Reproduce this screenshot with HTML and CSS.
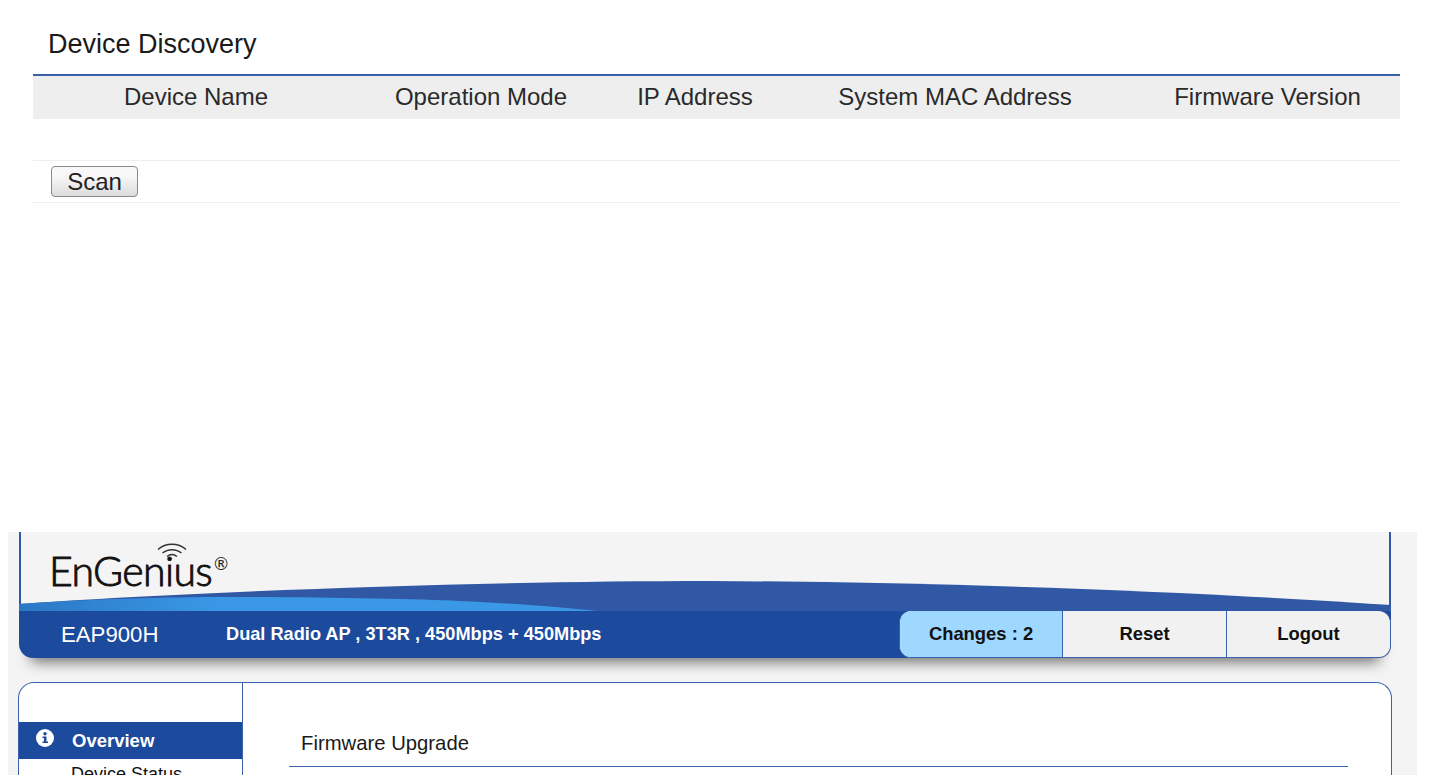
FILE: index.html
```html
<!DOCTYPE html>
<html lang="en">
<head>
<meta charset="utf-8">
<title>EnGenius EAP900H</title>
<link rel="stylesheet" href="styles.css">
</head>
<body>
<section class="discovery">
  <h1 class="discovery-title">Device Discovery</h1>
  <div class="device-head">
    <span>Device Name</span>
    <span>Operation Mode</span>
    <span>IP Address</span>
    <span>System MAC Address</span>
    <span class="last-col">Firmware Version</span>
  </div>
  <div class="device-empty"></div>
  <div class="device-actions"><button class="scan" type="button">Scan</button></div>
</section>
<section class="shot">
  <header class="head">
    <svg class="swoosh" width="1372" height="80" viewBox="0 0 1372 80" aria-hidden="true">
      <defs>
        <linearGradient id="lb" x1="0" x2="1" y1="0" y2="0">
          <stop offset="0" stop-color="#2a78c4"/>
          <stop offset=".35" stop-color="#3a98e6"/>
          <stop offset="1" stop-color="#3a98e6"/>
        </linearGradient>
      </defs>
      <path d="M0 72 C170 60 460 49 690 49 C930 50 1180 60 1372 73 V81 H0Z" fill="#3058a4"/>
      <path d="M0 72 C70 67 150 65 209 65 C300 65 400 67 439 69 C490 71 540 75 578 79 V81 H0Z" fill="url(#lb)"/>
    </svg>
    <div class="logo">
      <span class="logo-word">EnGen<span class="logo-i">i</span>us</span><span class="logo-reg">®</span>
      <svg class="logo-wifi" width="32" height="20" viewBox="0 0 32 20" aria-hidden="true">
        <path d="M2 7.500C10 .5 22 .5 30 7.500" />
        <path d="M6.500 11C12 6.500 20 6.500 25.500 11" />
        <path d="M11 14.500C14 12 18 12 21 14.500" />
      </svg>
    </div>
    <div class="bar">
      <span class="model">EAP900H</span>
      <span class="tagline">Dual Radio AP , 3T3R , 450Mbps + 450Mbps</span>
      <nav class="bar-btns">
        <a class="bar-btn changes">Changes : 2</a>
        <a class="bar-btn">Reset</a>
        <a class="bar-btn">Logout</a>
      </nav>
    </div>
  </header>
  <div class="panel">
    <aside class="side">
      <div class="side-active">
        <svg class="info" width="18" height="18" viewBox="0 0 18 18" aria-hidden="true">
          <circle cx="9" cy="9" r="9" fill="#fff"/>
          <circle cx="9" cy="4.800" r="1.700" fill="#1c4a9c"/>
          <path d="M6.500 7.500H10.500V12.500H12V14H6.500V12.500H8V9H6.500Z" fill="#1c4a9c"/>
        </svg>
        <span>Overview</span>
      </div>
      <div class="side-item">Device Status</div>
    </aside>
    <main class="main">
      <h2 class="main-title">Firmware Upgrade</h2>
    </main>
  </div>
</section>
</body>
</html>
```
FILE: styles.css
```css
html, body {
  margin: 0;
  padding: 0;
  height: 775px;
  overflow: hidden;
  background: #fff;
  font-family: "Liberation Sans", Arial, sans-serif;
  color: #111;
}

.discovery {
  height: 532px;
  box-sizing: border-box;
  padding: 26px 38px 0 33px;
}
.discovery-title {
  margin: 0;
  padding-left: 15px;
  height: 48px;
  box-sizing: border-box;
  font-size: 27px;
  line-height: 36px;
  font-weight: 400;
  color: #1a1a1a;
}
.device-head {
  display: grid;
  grid-template-columns: 326px 244px 184px 336px 277px;
  height: 45px;
  box-sizing: border-box;
  border-top: 2px solid #3a62ac;
  background: #eee;
  font-size: 24px;
  line-height: 41px;
  text-align: center;
  color: #2a2a2a;
}
.last-col { padding-left: 12px; }
.device-empty {
  height: 41px;
  border-bottom: 1px solid #eee;
}
.device-actions {
  padding-left: 18px;
  box-sizing: border-box;
  height: 42px;
  border-bottom: 1px solid #eee;
  display: flex;
  align-items: center;
}
.scan {
  width: 87px;
  height: 31px;
  padding: 0;
  border: 1px solid #8a8a8a;
  border-radius: 4px;
  background: linear-gradient(#f8f8f8 30%, #dcdcdc);
  font-family: inherit;
  font-size: 24px;
  line-height: 28px;
  color: #222;
}

.shot {
  height: 243px;
  margin: 0 21px 0 8px;
  padding: 0 25px 0 11px;
  background: #f4f4f4;
  overflow: hidden;
}

.head {
  position: relative;
  width: 1372px;
  height: 126px;
}
.head::before,
.head::after {
  content: "";
  position: absolute;
  top: 0;
  height: 80px;
  width: 2px;
  background: #2f5aa8;
}
.head::before { left: 0; }
.head::after { right: 0; }
.swoosh {
  position: absolute;
  left: 0;
  top: 0;
}

.logo {
  position: relative;
  height: 79px;
  padding-left: 30px;
  box-sizing: border-box;
}
.logo-word {
  display: inline-block;
  font-family: Lato, "Liberation Sans", sans-serif;
  font-weight: 300;
  font-size: 41px;
  line-height: 42px;
  letter-spacing: -.6px;
  margin-top: 18px;
  color: #111;
  -webkit-text-stroke: .9px #111;
}
.logo-reg {
  position: absolute;
  left: 195px;
  top: 23px;
  font-family: Lato, sans-serif;
  font-size: 17px;
  line-height: 18px;
  color: #222;
}
.logo-wifi {
  position: absolute;
  left: 137px;
  top: 10px;
  fill: none;
  stroke: #333;
  stroke-width: 1.500;
}

.bar {
  position: relative;
  height: 47px;
  display: flex;
  align-items: center;
  background: #1c4a9c;
  border-radius: 0 0 14px 14px;
  color: #fff;
  box-shadow: 0 16px 14px -12px rgba(0, 0, 0, .55);
}
.model {
  width: 207px;
  padding-left: 42px;
  box-sizing: border-box;
  font-size: 22.200px;
}
.tagline {
  font-size: 18.200px;
  font-weight: 700;
}
.bar-btns {
  margin-left: auto;
  height: 100%;
  width: 492px;
  display: flex;
  box-sizing: border-box;
  border: 1px solid #3a62ac;
  border-top: 0;
  border-radius: 12px;
  overflow: hidden;
  background: #f1f1f1;
}
.bar-btn {
  flex: 1;
  display: flex;
  align-items: center;
  justify-content: center;
  border-left: 1px solid #3a62ac;
  font-size: 18.400px;
  font-weight: 700;
  color: #111;
}
.bar-btn:first-child { border-left: 0; }
.changes {
  flex: 0 0 162px;
  background: #9fd8ff;
}

.panel {
  display: flex;
  margin: 24px 0 0 -1px;
  width: 1374px;
  height: 140px;
  box-sizing: border-box;
  background: #fff;
  border: 1px solid #3a62ac;
  border-bottom: 0;
  border-radius: 16px 16px 0 0;
  overflow: hidden;
}
.side {
  width: 223px;
  flex: none;
  padding-top: 39px;
  border-right: 1px solid #3a62ac;
}
.side-active {
  position: relative;
  height: 37px;
  background: #1c4a9c;
  display: flex;
  align-items: center;
  padding-left: 53px;
  color: #fff;
  font-size: 18.500px;
  font-weight: 700;
}
.info {
  position: absolute;
  left: 17px;
  top: 7px;
}
.side-item {
  padding: 5px 0 0 52px;
  font-size: 18px;
  line-height: 20px;
}
.main {
  flex: none;
  width: 1059px;
  margin-left: 46px;
  padding-top: 43px;
}
.main-title {
  margin: 0;
  height: 41px;
  box-sizing: border-box;
  padding-left: 12px;
  border-bottom: 1px solid #3a62ac;
  font-size: 20.300px;
  line-height: 34px;
  font-weight: 400;
  color: #1a1a1a;
}
```
